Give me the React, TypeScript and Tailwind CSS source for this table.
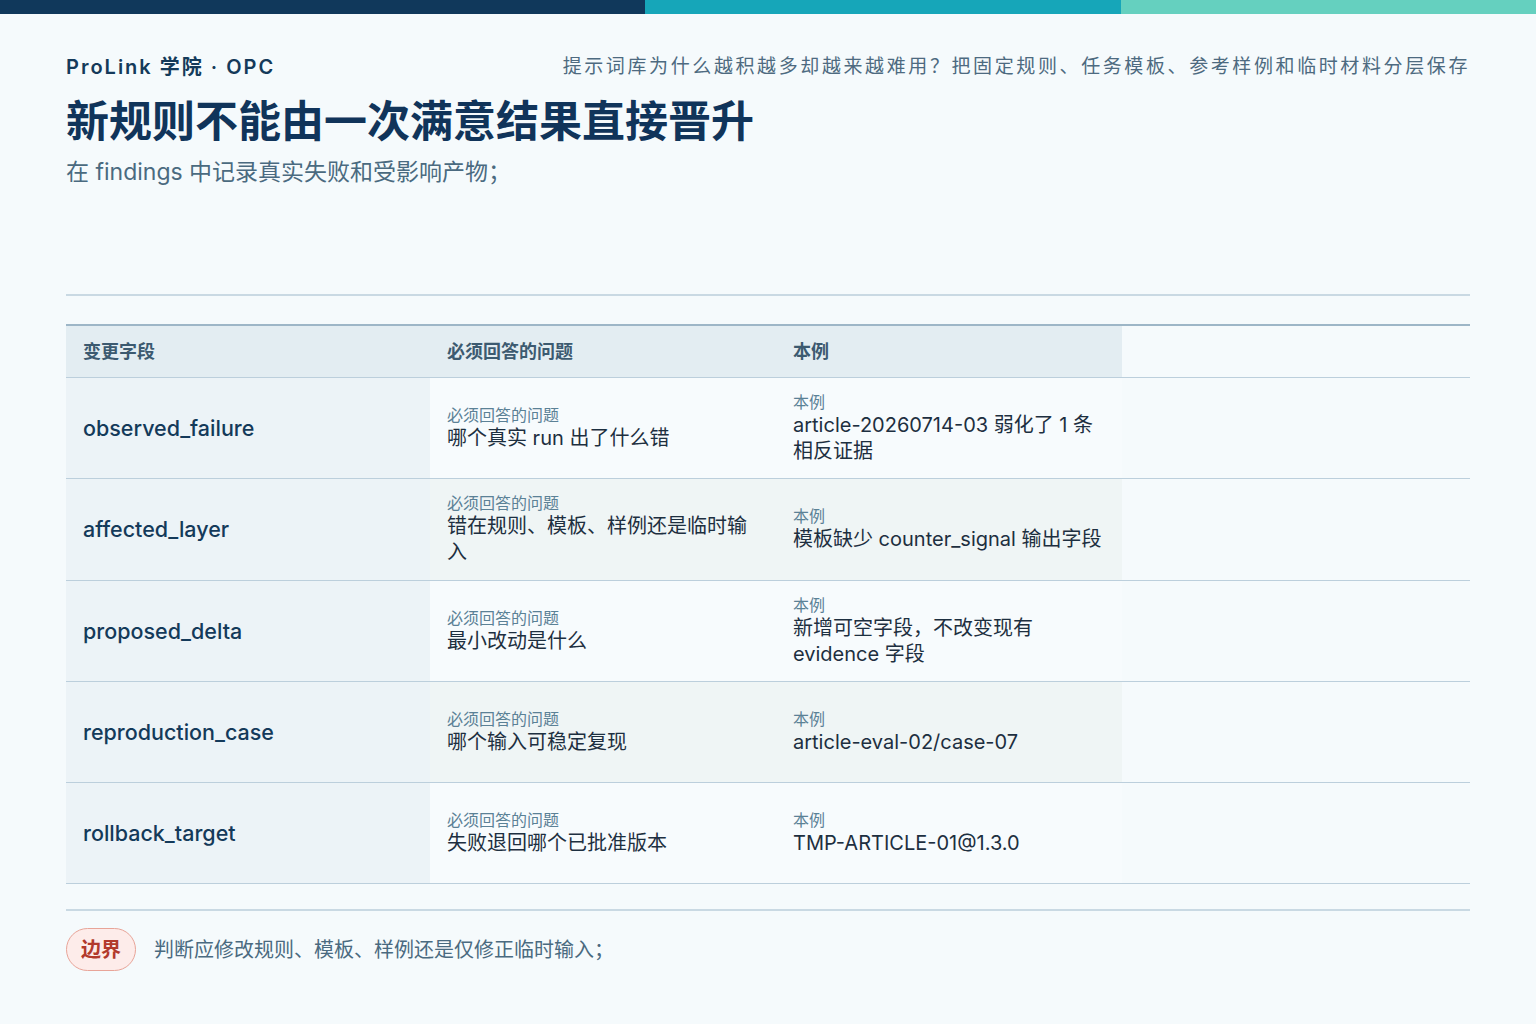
import React from 'react';

type Row = {
  field: string;
  question: string;
  example: string;
  tint: boolean;
};

const rows: Row[] = [
  { field: 'observed_failure', question: '哪个真实 run 出了什么错', example: 'article-20260714-03 弱化了 1 条相反证据', tint: false },
  { field: 'affected_layer', question: '错在规则、模板、样例还是临时输入', example: '模板缺少 counter_signal 输出字段', tint: true },
  { field: 'proposed_delta', question: '最小改动是什么', example: '新增可空字段，不改变现有 evidence 字段', tint: false },
  { field: 'reproduction_case', question: '哪个输入可稳定复现', example: 'article-eval-02/case-07', tint: true },
  { field: 'rollback_target', question: '失败退回哪个已批准版本', example: 'TMP-ARTICLE-01@1.3.0', tint: false },
];

const font = { fontFamily: 'Inter, "Noto Sans CJK SC", sans-serif' };

const Cell = ({ label, value, tint }: { label: string; value: string; tint: boolean }) => (
  <div className={`flex flex-col justify-center px-[17px] ${tint ? 'bg-[#eff5f5]' : 'bg-[#f7fbfd]'}`}>
    <div className="text-[16px] leading-[20px] text-[#5b8196]">{label}</div>
    <div className="text-[20px] leading-[26px] text-[#1d2f40]">{value}</div>
  </div>
);

export default function App() {
  return (
    <div className="min-h-[1024px] w-[1536px] bg-[#f5fafc]" style={font}>
      <div className="flex h-[14px]">
        <div className="w-[645px] bg-[#10385b]" />
        <div className="w-[476px] bg-[#16a6b9]" />
        <div className="flex-1 bg-[#65d0bf]" />
      </div>

      <div className="px-[66px] pt-[38px]">
        <div className="flex items-center justify-between">
          <div className="text-[20px] font-semibold tracking-[0.1em] text-[#143a5a]">ProLink 学院 · OPC</div>
          <div className="text-[19px] tracking-[0.137em] text-[#4d6a80]">
            提示词库为什么越积越多却越来越难用？把固定规则、任务模板、参考样例和临时材料分层保存
          </div>
        </div>

        <h1 className="mt-[9px] text-[43px] font-bold leading-[60px] text-[#10345a]">新规则不能由一次满意结果直接晋升</h1>
        <p className="mt-[5px] text-[23px] leading-[32px] text-[#4a6a80]">在 findings 中记录真实失败和受影响产物；</p>

        <div className="mt-[106px] h-[2px] bg-[#c9d9e3]" />

        <div className="mt-[28px] border-t-2 border-[#9db6c7]">
          <div className="grid h-[52px] grid-cols-[364px_346px_346px_1fr] border-b border-[#bccfdc] text-[18px] font-semibold text-[#3c5a70]">
            <div className="flex items-center bg-[#e3edf2] px-[17px]">变更字段</div>
            <div className="flex items-center bg-[#e3edf2] px-[17px]">必须回答的问题</div>
            <div className="flex items-center bg-[#e3edf2] px-[17px]">本例</div>
            <div />
          </div>
          {rows.map((r) => (
            <div key={r.field} className="grid h-[101.3px] grid-cols-[364px_346px_346px_1fr] border-b border-[#bccfdc]">
              <div className="flex items-center bg-[#ecf3f7] px-[17px] text-[21.5px] font-medium text-[#143a5a]">{r.field}</div>
              <Cell label="必须回答的问题" value={r.question} tint={r.tint} />
              <Cell label="本例" value={r.example} tint={r.tint} />
              <div />
            </div>
          ))}
        </div>

        <div className="mt-[25px] h-[2px] bg-[#c9d9e3]" />

        <div className="mt-[17px] flex items-center gap-[18px]">
          <span className="flex h-[43px] items-center rounded-full border border-[#e8a498] bg-[#fdecea] px-[14px] text-[20px] font-bold text-[#b23a2c]">
            边界
          </span>
          <span className="text-[20px] text-[#4a6a80]">判断应修改规则、模板、样例还是仅修正临时输入；</span>
        </div>
      </div>
    </div>
  );
}
